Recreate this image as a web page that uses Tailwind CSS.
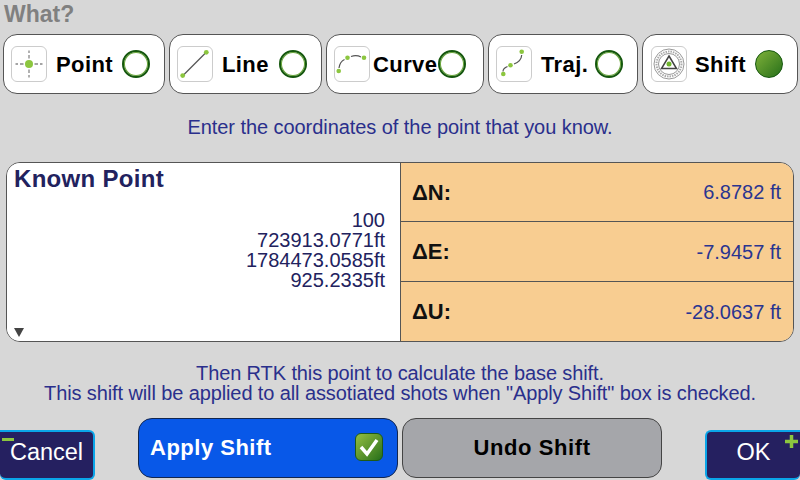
<!DOCTYPE html>
<html lang="en">
<head>
    <meta charset="UTF-8">
    <title>Base Shift</title>
    <script src="https://cdn.jsdelivr.net/npm/@tailwindcss/browser@4"></script>
</head>
<body class="w-[800px] h-[480px] overflow-hidden bg-[#d7d7d7] font-['Liberation_Sans',Arial,sans-serif] flex flex-col">
    <div class="h-[34px] pl-1 pt-[1px] text-[23px] leading-[26px] font-bold text-[#808080]">What?</div>

    <!-- type tabs -->
    <div class="flex h-[60px] pl-[3px] gap-1">
        <div class="w-[162px] flex items-center bg-white border border-[#555] rounded-[14px] pl-[7px]">
            <div class="w-9 h-9 shrink-0 bg-white border border-[#ccc] rounded-[6px]">
                <svg width="34" height="34" viewBox="0 0 34 34">
                    <path d="M17 3.500V6M17 8V11.500M17 22.500V26M17 28V30.500M3.500 17H6M8 17H11.500M22.500 17H26M28 17H30.500" stroke="#888" stroke-width="1.300" fill="none"/>
                    <circle cx="17" cy="17" r="4" fill="#8cc63f"/>
                </svg>
            </div>
            <span class="ml-[9px] text-[22px] font-bold tracking-[0.4px] text-black">Point</span>
            <div class="ml-[9px] w-[28px] h-[28px] rounded-full bg-white border-2 border-[#14570d] shadow-[inset_0_0_0_1px_#6aa838]"></div>
        </div>
        <div class="w-[153px] flex items-center bg-white border border-[#555] rounded-[14px] pl-[7px]">
            <div class="w-9 h-9 shrink-0 bg-white border border-[#ccc] rounded-[6px]">
                <svg width="34" height="34" viewBox="0 0 34 34">
                    <path d="M5 28.500L28 5.500" stroke="#555" stroke-width="1.200" fill="none"/>
                    <circle cx="4.700" cy="28.600" r="2.400" fill="#8cc63f"/>
                    <circle cx="28.300" cy="5.300" r="2.400" fill="#8cc63f"/>
                </svg>
            </div>
            <span class="ml-[9px] text-[22px] font-bold tracking-[0.4px] text-black">Line</span>
            <div class="ml-[10px] w-[28px] h-[28px] rounded-full bg-white border-2 border-[#14570d] shadow-[inset_0_0_0_1px_#6aa838]"></div>
        </div>
        <div class="w-[158px] flex items-center bg-white border border-[#555] rounded-[14px] pl-[7px]">
            <div class="w-9 h-9 shrink-0 bg-white border border-[#ccc] rounded-[6px]">
                <svg width="34" height="34" viewBox="0 0 34 34">
                    <path d="M4 21C4.500 17 6.500 14 9.500 12.500M16 9.500C19 8.500 23 8.500 26 10" stroke="#555" stroke-width="1.200" fill="none"/>
                    <circle cx="3.700" cy="24" r="2.300" fill="#8cc63f"/>
                    <circle cx="12.500" cy="10.700" r="2.300" fill="#8cc63f"/>
                    <circle cx="29" cy="10.700" r="2.300" fill="#8cc63f"/>
                </svg>
            </div>
            <span class="ml-[3px] text-[22px] font-bold tracking-[0.4px] text-black">Curve</span>
            <div class="ml-[1px] w-[28px] h-[28px] rounded-full bg-white border-2 border-[#14570d] shadow-[inset_0_0_0_1px_#6aa838]"></div>
        </div>
        <div class="w-[150px] flex items-center bg-white border border-[#555] rounded-[14px] pl-[7px]">
            <div class="w-9 h-9 shrink-0 bg-white border border-[#ccc] rounded-[6px]">
                <svg width="34" height="34" viewBox="0 0 34 34">
                    <path d="M6 24.500C6 22 8 20.500 10.500 19.500M17 17C21 15.500 24.500 12 24.700 8" stroke="#555" stroke-width="1.200" fill="none"/>
                    <circle cx="6.300" cy="27" r="2.300" fill="#8cc63f"/>
                    <circle cx="13.500" cy="18.300" r="2.300" fill="#8cc63f"/>
                    <circle cx="24.700" cy="4.700" r="2.300" fill="#8cc63f"/>
                </svg>
            </div>
            <span class="ml-[9px] text-[22px] font-bold tracking-[0.4px] text-black">Traj.</span>
            <div class="ml-[7px] w-[28px] h-[28px] rounded-full bg-white border-2 border-[#14570d] shadow-[inset_0_0_0_1px_#6aa838]"></div>
        </div>
        <div class="w-[156px] flex items-center bg-white border border-[#555] rounded-[14px] pl-[8px]">
            <div class="w-9 h-9 shrink-0 bg-white border border-[#ccc] rounded-[6px]">
                <svg width="34" height="34" viewBox="0 0 34 34">
                    <circle cx="17" cy="17" r="15" fill="none" stroke="#999" stroke-width="1"/>
                    <circle cx="17" cy="17" r="12.500" fill="none" stroke="#aaa" stroke-width="2" stroke-dasharray="1.500 1"/>
                    <circle cx="17" cy="17" r="10.500" fill="none" stroke="#999" stroke-width="1"/>
                    <path d="M17 9L24.500 21.500H9.500Z" fill="#fff" stroke="#444" stroke-width="1.500"/>
                    <circle cx="17" cy="17" r="2.500" fill="#6fb52c"/>
                </svg>
            </div>
            <span class="ml-[8px] text-[22px] font-bold tracking-[0.4px] text-black">Shift</span>
            <div class="ml-[9px] w-[28px] h-[28px] rounded-full border border-[#14570d] bg-linear-to-br from-[#7fb23a] to-[#24701a]"></div>
        </div>
    </div>

    <p class="mt-[23px] text-center text-[20px] leading-[20px] tracking-[-0.06px] text-[#2a2f8c]">Enter the coordinates of the point that you know.</p>

    <!-- known point + deltas -->
    <div class="mt-[25px] mx-[6px] h-[180px] flex border border-[#555] rounded-[14px] overflow-hidden">
        <div class="w-[394px] bg-white border-r border-[#555] relative pt-[2px] pr-[15px]">
            <div class="pl-[7px] text-[24px] leading-[28px] font-bold tracking-[0.3px] text-[#22225e]">Known Point</div>
            <div class="mt-[17px] text-right text-[20px] leading-[20px] text-[#22225e]">
                <div>100</div>
                <div>723913.0771ft</div>
                <div>1784473.0585ft</div>
                <div>925.2335ft</div>
            </div>
            <svg class="absolute left-[7px] bottom-[4px]" width="10" height="10" viewBox="0 0 10 10"><path d="M0 1H10L5 10Z" fill="#444"/></svg>
        </div>
        <div class="flex-1 flex flex-col bg-[#f8cd91]">
            <div class="h-[59px] flex items-center justify-between pl-[11px] pr-[12px] border-b border-[#555]">
                <span class="text-[22px] font-bold text-[#111]">ΔN:</span>
                <span class="text-[20px] text-[#2a3590]">6.8782 ft</span>
            </div>
            <div class="h-[60px] flex items-center justify-between pl-[11px] pr-[12px] border-b border-[#555]">
                <span class="text-[22px] font-bold text-[#111]">ΔE:</span>
                <span class="text-[20px] text-[#2a3590]">-7.9457 ft</span>
            </div>
            <div class="flex-1 flex items-center justify-between pl-[11px] pr-[12px]">
                <span class="text-[22px] font-bold text-[#111]">ΔU:</span>
                <span class="text-[20px] text-[#2a3590]">-28.0637 ft</span>
            </div>
        </div>
    </div>

    <div class="mt-[21px] text-center text-[20px] leading-[20px] tracking-[-0.11px] text-[#2a2f8c]">
        <p>Then RTK this point to calculate the base shift.</p>
        <p>This shift will be applied to all assotiated shots when "Apply Shift" box is checked.</p>
    </div>

    <!-- bottom actions -->
    <div class="mt-[15px] flex items-start">
        <div class="relative w-[95px] h-[50px] mt-[12px] pb-1 bg-[#252060] border-2 border-[#0aa5e8] border-l-0 rounded-r-[6px] rounded-bl-[6px] flex items-center justify-center text-white text-[23.500px]">
            Cancel
            <div class="absolute left-[2px] top-[6px] w-3 h-[3px] bg-[#8cc63f]"></div>
        </div>
        <div class="ml-[43px] w-[260px] h-[60px] pb-[2px] bg-[#0858e8] border border-[#12264f] rounded-[14px] flex items-center justify-between pl-[11px] pr-[14px]">
            <span class="text-[22px] font-bold tracking-[0.5px] text-white">Apply Shift</span>
            <div class="w-[28px] h-[28px] rounded-[6px] border border-[#1f5a15] bg-linear-to-br from-[#94bf42] to-[#24701a] flex items-center justify-center">
                <svg width="24" height="24" viewBox="0 0 24 24"><path d="M4 12L10 19L20 5" fill="none" stroke="#fff" stroke-width="3.500"/></svg>
            </div>
        </div>
        <div class="ml-1 w-[260px] h-[60px] pb-[2px] bg-[#a5a6aa] border border-[#444] rounded-[14px] flex items-center justify-center text-[22px] font-bold tracking-[0.6px] text-black">Undo Shift</div>
        <div class="relative ml-[43px] w-[95px] h-[50px] mt-[12px] pb-1 bg-[#252060] border-2 border-[#0aa5e8] border-r-0 rounded-l-[6px] rounded-br-[6px] flex items-center justify-center text-white text-[23.500px]">
            OK
            <svg class="absolute right-[2px] top-[3px]" width="13" height="13" viewBox="0 0 13 13"><path d="M6.500 0V13M0 6.500H13" stroke="#8cc63f" stroke-width="3.500"/></svg>
        </div>
    </div>
</body>
</html>
